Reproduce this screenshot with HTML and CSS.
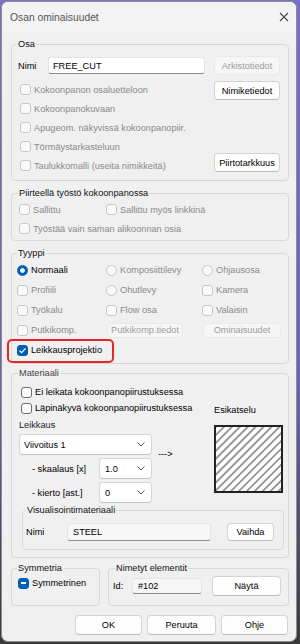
FILE: index.html
```html
<!doctype html>
<html>
	<head>
		<title>Osan ominaisuudet</title>
		<meta charset="utf-8" />
		<meta name="viewport" content="width=device-width, initial-scale=1" />
		<link rel="stylesheet" href="styles.css">
	</head>

	<body>
		<div id="dialog">
			<div class="titlebar">
				<span class="title">Osan ominaisuudet</span>
				<svg class="close" width="10" height="10" viewBox="0 0 10 10">
					<path d="M1 1L9 9M9 1L1 9" stroke="#4a4a4a" stroke-width="1.1" fill="none" />
				</svg>
			</div>

			<div class="content">

				<!-- OSA -->
				<fieldset id="osa">
					<legend>Osa</legend>
					<div class="namerow">
						<span class="namelbl">Nimi</span>
						<div class="field namefield">FREE_CUT</div>
						<div class="btn off wbtn">Arkistotiedot</div>
					</div>
					<div class="osabody">
						<div class="checks">
							<div class="chk off"><span class="cb"></span>Kokoonpanon osaluetteloon</div>
							<div class="chk off"><span class="cb"></span>Kokoonpanokuvaan</div>
							<div class="chk off"><span class="cb"></span>Apugeom. näkyvissä kokoonpanopiir.</div>
							<div class="chk off"><span class="cb"></span>Törmäystarkasteluun</div>
							<div class="chk off"><span class="cb"></span>Taulukkomalli (useita nimikkeitä)</div>
						</div>
						<div class="side">
							<div class="btn wbtn">Nimiketiedot</div>
							<div class="btn wbtn">Piirtotarkkuus</div>
						</div>
					</div>
				</fieldset>

				<!-- PIIRTEELLÄ TYÖSTÖ -->
				<fieldset id="piirre">
					<legend>Piirteellä työstö kokoonpanossa</legend>
					<div class="cols2">
						<div class="chk off"><span class="cb"></span>Sallittu</div>
						<div class="chk off"><span class="cb"></span>Sallittu myös linkkinä</div>
					</div>
					<div class="chk off"><span class="cb"></span>Työstää vain saman alikoonnan osia</div>
				</fieldset>

				<!-- TYYPPI -->
				<fieldset id="tyyppi">
					<legend>Tyyppi</legend>
					<div class="types">
						<div class="chk"><span class="rb sel"></span>Normaali</div>
						<div class="chk off"><span class="rb"></span>Komposiittilevy</div>
						<div class="chk off"><span class="rb"></span>Ohjausosa</div>

						<div class="chk off"><span class="cb"></span>Profiili</div>
						<div class="chk off"><span class="rb"></span>Ohutlevy</div>
						<div class="chk off"><span class="cb"></span>Kamera</div>

						<div class="chk off"><span class="cb"></span>Työkalu</div>
						<div class="chk off"><span class="cb"></span>Flow osa</div>
						<div class="chk off"><span class="cb"></span>Valaisin</div>

						<div class="chk off"><span class="cb"></span>Putkikomp.</div>
						<div class="cell"><div class="btn off small putki">Putkikomp.tiedot</div></div>
						<div class="cell"><div class="btn off small omin">Ominaisuudet</div></div>

						<div class="chk mark">
							<span class="cb checked">
								<svg width="9" height="9" viewBox="0 0 9 9"><path d="M1.6 4.7L3.6 6.6L7.6 2.3" stroke="#fff" stroke-width="1.2" fill="none" /></svg>
							</span>Leikkausprojektio
						</div>
					</div>
				</fieldset>

				<!-- MATERIAALI -->
				<fieldset id="materiaali">
					<legend>Materiaali</legend>
					<div class="matgrid">
						<div class="chk on wide"><span class="cb"></span>Ei leikata kokoonpanopiirustuksessa</div>
						<div class="chk on half"><span class="cb"></span>Läpinäkyvä kokoonpanopiirustuksessa</div>
						<div class="prevlbl">Esikatselu</div>

						<div class="leftblock">
							<div class="cap">Leikkaus</div>
							<div class="combo big">
								<span>Viivoitus 1</span>
								<svg width="8" height="5" viewBox="0 0 8 5"><path d="M0.5 0.5L4 4L7.5 0.5" stroke="#555" fill="none" /></svg>
							</div>
							<div class="subrow">
								<span class="sublbl">- skaalaus [x]</span>
								<div class="combo">
									<span>1.0</span>
									<svg width="8" height="5" viewBox="0 0 8 5"><path d="M0.5 0.5L4 4L7.5 0.5" stroke="#555" fill="none" /></svg>
								</div>
							</div>
							<div class="subrow">
								<span class="sublbl">- kierto [ast.]</span>
								<div class="combo">
									<span>0</span>
									<svg width="8" height="5" viewBox="0 0 8 5"><path d="M0.5 0.5L4 4L7.5 0.5" stroke="#555" fill="none" /></svg>
								</div>
							</div>
						</div>
						<div class="arrow">---&gt;</div>
						<svg class="preview" width="69" height="68" viewBox="0 0 69 68">
							<defs>
								<pattern id="hatch" width="5.6" height="5.6" patternUnits="userSpaceOnUse" patternTransform="rotate(45)">
									<line x1="2.8" y1="0" x2="2.8" y2="5.6" stroke="#222" stroke-width="0.9" />
								</pattern>
							</defs>
							<rect x="1" y="1" width="67" height="66" fill="#fff" />
							<rect x="1" y="1" width="67" height="66" fill="url(#hatch)" stroke="#222" stroke-width="2" />
						</svg>
					</div>

					<fieldset id="visu">
						<legend>Visualisointimateriaali</legend>
						<div class="visrow">
							<span class="vislbl">Nimi</span>
							<div class="field ro steel">STEEL</div>
							<div class="btn vaihda">Vaihda</div>
						</div>
					</fieldset>
				</fieldset>

				<!-- SYMMETRIA / NIMETYT -->
				<div class="bottomgroups">
					<fieldset id="sym">
						<legend>Symmetria</legend>
						<div class="chk"><span class="cb mixed"><span class="minus"></span></span>Symmetrinen</div>
					</fieldset>
					<fieldset id="nim">
						<legend>Nimetyt elementit</legend>
						<div class="idrow">
							<span class="idlbl">Id:</span>
							<div class="field ro idfield">#102</div>
							<div class="btn nayta">Näytä</div>
						</div>
					</fieldset>
				</div>

				<div class="actions">
					<div class="btn act">OK</div>
					<div class="btn act wide2">Peruuta</div>
					<div class="btn act">Ohje</div>
				</div>

			</div>
		</div>
	</body>
</html>
```

FILE: styles.css
```css
* {
	box-sizing: border-box;
}

body {
	margin: 0;
	height: 644px;
	background: linear-gradient(#7a70c8, #6a64b0 60%, #3a3a3a);
	font-family: "Liberation Sans", Arial, sans-serif;
	font-size: 9.2px;
	color: #000;
	overflow: hidden;
}

#dialog {
	width: 296px;
	height: 641px;
	margin: 1px 0 0 1px;
	background-color: #f0f0f0;
	border: 1px solid #8d8d8d;
	border-radius: 7px;
	overflow: hidden;
}

.titlebar {
	height: 30px;
	display: flex;
	align-items: center;
	justify-content: space-between;
	padding: 0 7px 0 8px;
	background-color: #f3f3f3;
}

.title {
	font-size: 10.3px;
	color: #555;
}

.content {
	padding: 6px 7px 0 9px;
}

/* GROUP BOXES */

fieldset {
	margin: 0;
	min-width: 0;
	border: 1px solid #d8d8d8;
	border-radius: 4px;
}

legend {
	padding: 0 1px;
	line-height: 12px;
	margin-left: -1px;
	color: #111;
}

#osa {
	padding: 7px 8px 5px 6px;
}

#piirre {
	margin-top: 6px;
	padding: 1px 6px 2px 7px;
}

#tyyppi {
	margin-top: 6px;
	padding: 1px 5px 3px 5px;
}

#tyyppi legend {
	margin-left: 0;
}

#materiaali {
	margin-top: 3px;
	padding: 5px 4px 7px 7px;
}

#materiaali > legend {
	color: #444;
}

#visu {
	margin: 1px 0 0 3px;
	padding: 6px 9px 7px 3px;
}

#visu legend {
	margin-left: 0;
}

.bottomgroups {
	display: flex;
	gap: 8px;
	margin-top: 4px;
}

#sym {
	width: 89px;
	padding: 2px 4px 14px 6px;
}

#nim {
	flex: 1;
	padding: 2px 7px 9px 4px;
}

#nim legend {
	margin-left: 2px;
}

/* CHECKBOXES AND RADIOS */

.chk {
	display: flex;
	align-items: center;
	gap: 3px;
	white-space: nowrap;
	height: 19px;
}

.chk.off {
	color: #8a8a8a;
}

.cb, .rb {
	flex: none;
	width: 11px;
	height: 11px;
	border: 1px solid #c6c6c6;
	background-color: #fafafa;
	display: flex;
	align-items: center;
	justify-content: center;
}

.cb {
	border-radius: 3px;
}

.rb {
	border-radius: 50%;
}

.chk.on .cb {
	border-color: #6b6b6b;
	background-color: #fff;
}

.cb.checked, .cb.mixed {
	background-color: #005fb8;
	border-color: #005fb8;
}

.rb.sel {
	border-color: #005fb8;
	background: radial-gradient(circle, #fff 0 2px, #005fb8 2.6px);
}

.minus {
	width: 5px;
	height: 1.3px;
	background-color: #fff;
}

/* BUTTONS AND FIELDS */

.btn {
	height: 19px;
	display: flex;
	align-items: center;
	justify-content: center;
	background-color: #fdfdfd;
	border: 1px solid #d3d3d3;
	border-bottom-color: #bcbcbc;
	border-radius: 4px;
	white-space: nowrap;
}

.btn.off {
	background-color: #f6f6f6;
	border-color: #e9e9e9;
	color: #9c9c9c;
}

.btn.small {
	height: 15px;
}

.field {
	height: 17px;
	display: flex;
	align-items: center;
	padding-left: 5px;
	background-color: #fff;
	border: 1px solid #e4e4e4;
	border-bottom-color: #8a8a8a;
	border-radius: 3px;
}

.field.ro {
	background-color: #f6f6f6;
}

.combo {
	height: 21px;
	width: 53px;
	display: flex;
	align-items: center;
	justify-content: space-between;
	padding: 0 6px 0 5px;
	background-color: #fff;
	border: 1px solid #d6d6d6;
	border-bottom-color: #c2c2c2;
	border-radius: 4px;
}

.combo.big {
	width: 133px;
	margin-top: 2px;
	padding-left: 4px;
}

/* OSA */

.namerow {
	display: flex;
	align-items: center;
	height: 17px;
}

.namelbl {
	width: 30px;
}

.namefield {
	width: 157px;
	margin-right: 9px;
	padding-left: 4px;
}

.wbtn {
	width: 66px;
}

.osabody {
	display: flex;
	margin-top: 6px;
}

.checks {
	flex: 1;
	padding-left: 2px;
}

.side {
	width: 66px;
	display: flex;
	flex-direction: column;
	justify-content: space-between;
	padding: 1px 0 3px;
}

/* PIIRRE */

.cols2 {
	display: grid;
	grid-template-columns: 87px 1fr;
}

/* TYYPPI */

.types {
	display: grid;
	grid-template-columns: 89px 96px 1fr;
	grid-auto-rows: 20px;
}

.types .chk {
	height: auto;
}

.cell {
	display: flex;
	align-items: center;
}

.putki {
	width: 76px;
	margin-left: 1px;
}

.omin {
	width: 78px;
	margin-left: 1px;
}

.mark {
	position: relative;
	justify-self: start;
}

.mark::after {
	content: "";
	position: absolute;
	left: -10px;
	right: -12px;
	top: -1px;
	bottom: -3px;
	border: 2px solid #e3262e;
	border-radius: 5px;
}

/* MATERIAALI */

.matgrid {
	display: grid;
	grid-template-columns: 133px 62px 1fr;
}

.matgrid .chk {
	height: 16px;
	margin-left: 2px;
}

.matgrid .wide {
	grid-column: 1 / -1;
}

.matgrid .half {
	grid-column: 1 / 3;
}

.prevlbl {
	align-self: end;
	line-height: 12px;
}

.leftblock {
	margin-top: 2px;
}

.cap {
	line-height: 14px;
	color: #222;
}

.subrow {
	display: flex;
	align-items: center;
	justify-content: space-between;
	margin-top: 3px;
}

.sublbl {
	padding-left: 13px;
}

.arrow {
	align-self: start;
	margin-top: 33px;
	padding-left: 6px;
}

.preview {
	display: block;
	margin-top: 9px;
}

.visrow {
	display: flex;
	align-items: center;
	height: 20px;
}

.vislbl {
	width: 41px;
}

.steel {
	width: 144px;
	height: 18px;
}

.vaihda {
	width: 47px;
	height: 18px;
	margin-left: auto;
}

/* BOTTOM */

#sym .chk {
	height: 14px;
}

.idrow {
	display: flex;
	align-items: center;
	height: 20px;
}

.idlbl {
	width: 19px;
}

.idfield {
	width: 70px;
	height: 16px;
}

.nayta {
	width: 69px;
	height: 20px;
	margin-left: auto;
}

.actions {
	display: flex;
	justify-content: flex-end;
	gap: 5px;
	margin: 9px 1px 0 0;
}

.act {
	width: 67px;
	height: 20px;
}

.act.wide2 {
	width: 69px;
}
```
